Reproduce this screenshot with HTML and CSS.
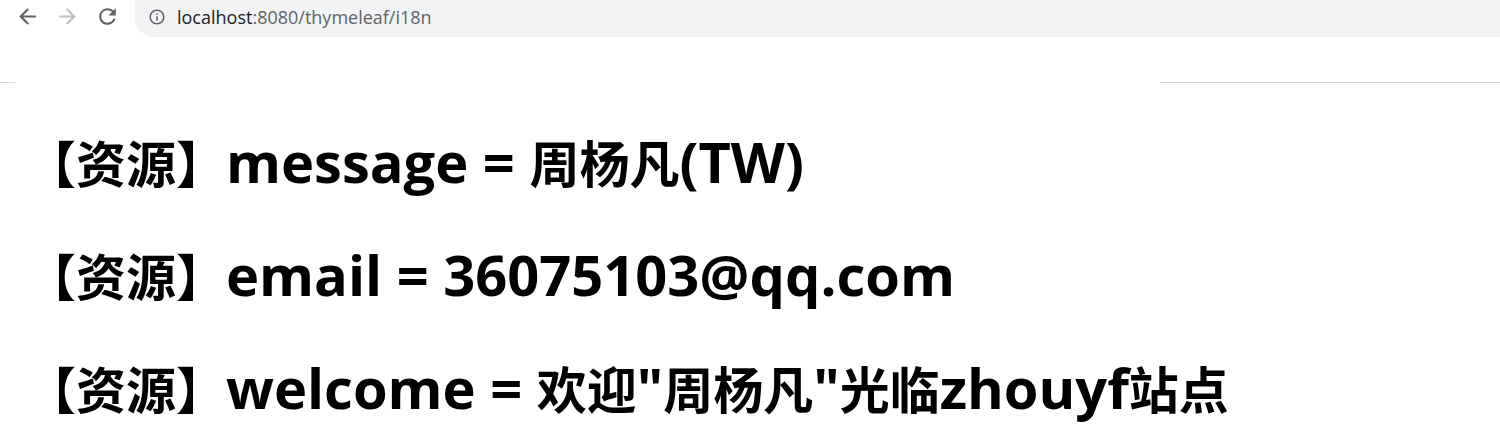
FILE: index.html
```html
<!DOCTYPE html>
<html lang="zh-CN">
<head>
<meta charset="utf-8">
<title>i18n</title>
<link rel="stylesheet" href="styles.css">
</head>
<body>
<header class="chrome">
  <div class="toolbar">
    <div class="nav-btn">
      <svg viewBox="0 0 24 24" width="25" height="25"><path fill="#5f6368" d="M20 11H7.83l5.59-5.590L12 4l-8 8 8 8 1.41-1.41L7.83 13H20v-2z"/></svg>
    </div>
    <div class="nav-btn">
      <svg viewBox="0 0 24 24" width="25" height="25"><path fill="#bdc1c6" d="M12 4l-1.41 1.41L16.17 11H4v2h12.17l-5.58 5.59L12 20l8-8z"/></svg>
    </div>
    <div class="nav-btn">
      <svg viewBox="0 0 24 24" width="25" height="25"><path fill="#5f6368" d="M17.65 6.35C16.2 4.9 14.21 4 12 4c-4.42 0-7.99 3.58-7.99 8s3.57 8 7.99 8c3.73 0 6.84-2.55 7.73-6h-2.08c-.82 2.33-3.04 4-5.65 4-3.31 0-6-2.69-6-6s2.69-6 6-6c1.66 0 3.14.69 4.22 1.78L13 11h7V4l-2.35 2.35z"/></svg>
    </div>
    <div class="omnibox">
      <svg class="info" viewBox="0 0 24 24" width="18" height="18"><path fill="#5f6368" d="M11 7h2v2h-2zm0 4h2v6h-2zm1-9C6.48 2 2 6.480 2 12s4.48 10 10 10 10-4.48 10-10S17.52 2 12 2zm0 18c-4.41 0-8-3.59-8-8s3.59-8 8-8 8 3.59 8 8-3.59 8-8 8z"/></svg>
      <span class="url"><span class="host">localhost</span>:8080/thymeleaf/i18n</span>
    </div>
  </div>
  <div class="divider">
    <span class="seg-left"></span>
    <span class="seg-gap"></span>
    <span class="seg-right"></span>
  </div>
</header>
<main class="content">
  <h1 class="msg">【资源】<span class="lat">message = </span>周杨凡<span class="lat">(TW)</span></h1>
  <h1 class="msg">【资源】<span class="lat">email = 36075103@qq.com</span></h1>
  <h1 class="msg">【资源】<span class="lat">welcome = </span>欢迎<span class="lat">"</span>周杨凡<span class="lat">"</span>光临<span class="lat">zhouyf</span>站点</h1>
</main>
</body>
</html>
```

FILE: styles.css
```css
html, body {
  margin: 0;
  padding: 0;
  background: #ffffff;
}

body {
  width: 1500px;
  height: 435px;
  overflow: hidden;
  font-family: "Open Sans", "Noto Sans CJK SC", sans-serif;
}

.chrome {
  display: flex;
  flex-direction: column;
  height: 83px;
}

.toolbar {
  display: flex;
  align-items: flex-start;
  height: 37px;
  padding-left: 7px;
}

.nav-btn {
  width: 40px;
  height: 33px;
  display: flex;
  align-items: center;
  justify-content: center;
}

.omnibox {
  flex: 1;
  margin-left: 8px;
  height: 37px;
  box-sizing: border-box;
  background: #f1f3f4;
  border-bottom-left-radius: 19px;
  display: flex;
  align-items: center;
  padding-left: 13px;
  padding-bottom: 3px;
}

.info {
  flex: none;
}

.url {
  margin-left: 11px;
  font-family: "Open Sans", "Noto Sans", sans-serif;
  font-size: 18px;
  color: #5f6368;
}

.host {
  color: #202124;
}

.divider {
  margin-top: auto;
  display: flex;
  height: 1px;
}

.seg-left {
  width: 15px;
  background: #d9d9d9;
}

.seg-gap {
  flex: 1;
}

.seg-right {
  width: 340px;
  background: #d9d9d9;
}

.content {
  padding-left: 26px;
}

.msg {
  margin: 0 0 52px 0;
  font-size: 50px;
  line-height: 60px;
  font-weight: 700;
  color: #000000;
  white-space: nowrap;
}

.msg:first-child {
  margin-top: 50px;
}

.msg:last-child {
  margin-bottom: 0;
}

.lat {
  font-size: 56px;
  line-height: 1;
}
```
